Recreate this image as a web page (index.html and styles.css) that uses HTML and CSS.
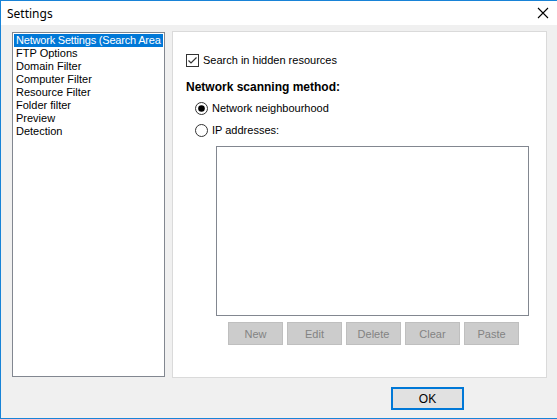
FILE: index.html
```html
<!DOCTYPE html>
<html>
<head>
<meta charset="utf-8">
<link rel="stylesheet" href="styles.css">
</head>
<body>
<div class="window">
  <div class="titlebar">
    <span class="title">Settings</span>
    <svg class="close" width="12" height="12" viewBox="0 0 12 12"><path d="M1 1 L11 11 M11 1 L1 11" stroke="#000" stroke-width="1.1" fill="none"/></svg>
  </div>
  <div class="client">
    <div class="main">
      <ul class="list">
        <li class="sel">Network Settings (Search Area</li>
        <li>FTP Options</li>
        <li>Domain Filter</li>
        <li>Computer Filter</li>
        <li>Resource Filter</li>
        <li>Folder filter</li>
        <li>Preview</li>
        <li>Detection</li>
      </ul>
      <div class="panel">
        <div class="row check-row">
          <svg class="box" width="13" height="13" viewBox="0 0 13 13"><rect x="0.5" y="0.5" width="12" height="12" fill="#fff" stroke="#333"/><path d="M2.5 6.5 L5 9 L10.5 3.5" stroke="#333" stroke-width="1.2" fill="none"/></svg>
          <span>Search in hidden resources</span>
        </div>
        <div class="heading">Network scanning method:</div>
        <div class="row radio-row r1">
          <svg class="radio" width="13" height="13" viewBox="0 0 13 13"><circle cx="6.5" cy="6.5" r="6" fill="#fff" stroke="#333"/><circle cx="6.5" cy="6.5" r="3.3" fill="#000"/></svg>
          <span>Network neighbourhood</span>
        </div>
        <div class="row radio-row r2">
          <svg class="radio" width="13" height="13" viewBox="0 0 13 13"><circle cx="6.5" cy="6.5" r="6" fill="#fff" stroke="#333"/></svg>
          <span>IP addresses:</span>
        </div>
        <div class="ipbox"></div>
        <div class="buttons">
          <div class="btn">New</div>
          <div class="btn">Edit</div>
          <div class="btn">Delete</div>
          <div class="btn">Clear</div>
          <div class="btn">Paste</div>
        </div>
      </div>
    </div>
    <div class="footer">
      <div class="ok">OK</div>
    </div>
  </div>
</div>
</body>
</html>
```
FILE: styles.css
```css
* { box-sizing: border-box; }
html, body { margin: 0; padding: 0; background: #f0f0f0; }
body { font-family: "Liberation Sans", Arial, sans-serif; font-size: 11px; color: #000; }
.window {
  width: 557px; height: 419px;
  border-top: 1px solid #1883d7;
  border-left: 1px solid #1883d7;
  border-bottom: 1px solid #1883d7;
  background: #f0f0f0;
  overflow: hidden;
}
.titlebar {
  height: 24px; background: #fff;
  display: flex; align-items: center; justify-content: space-between;
  padding: 0 7px 0 6px;
}
.title { font-family: "Noto Sans", "Liberation Sans", sans-serif; font-size: 12px; color: #000; }
.close { margin-right: 1px; }
.client { padding: 6px 0 0 11px; }
.main { display: flex; align-items: flex-start; gap: 7px; }
.list {
  list-style: none; margin: 1px 0 0 0; padding: 1px;
  width: 153px; height: 345px;
  background: #fff; border: 1px solid #828790;
  overflow: hidden;
}
.list li { height: 13px; line-height: 13px; padding-left: 2px; white-space: nowrap; overflow: hidden; }
.list li.sel { background: #0078d7; color: #fff; letter-spacing: -0.2px; }
.panel {
  width: 375px; height: 347px;
  background: #fff; border: 1px solid #dadada;
  padding: 22px 0 0 13px;
  display: flex; flex-direction: column;
}
.row { display: flex; align-items: center; height: 13px; }
.row span { line-height: 13px; }
.check-row .box { margin-right: 4px; }
.heading { font-weight: bold; font-size: 12px; height: 14px; line-height: 14px; margin-top: 13px; }
.radio-row { padding-left: 9px; }
.radio-row .radio { margin-right: 4px; }
.r1 { margin-top: 8px; }
.r2 { margin-top: 9px; }
.ipbox {
  margin: 9px 0 0 30px;
  width: 313px; height: 170px;
  border: 1px solid #828790; background: #fff;
}
.buttons { display: flex; gap: 4px; margin: 6px 0 0 42px; }
.btn {
  width: 55px; height: 23px;
  background: #cccccc; border: 1px solid #bfbfbf;
  color: #838383; display: flex; align-items: center; justify-content: center;
}
.footer { padding: 9px 0 0 379px; }
.ok {
  width: 73px; height: 23px;
  background: #e1e1e1; border: 2px solid #0078d7;
  display: flex; align-items: center; justify-content: center;
  font-size: 12px;
}
```
